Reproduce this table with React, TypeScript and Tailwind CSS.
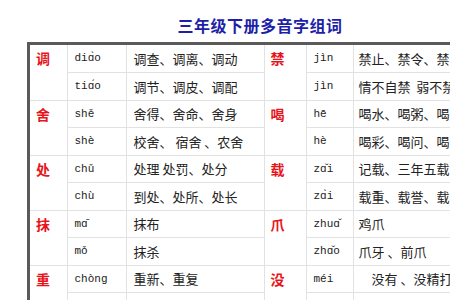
import React from "react";

type Row = { py: string; words: string };
type Group = { char: string; rows: Row[] };

const left: Group[] = [
    { char: "调", rows: [{ py: "diɑ̀o", words: "调查、调离、调动" }, { py: "tiɑ́o", words: "调节、调皮、调配" }] },
    { char: "舍", rows: [{ py: "shě", words: "舍得、舍命、舍身" }, { py: "shè", words: "校舍、 宿舍 、农舍" }] },
    { char: "处", rows: [{ py: "chǔ", words: "处理 处罚、处分" }, { py: "chù", words: "到处、处所、处长" }] },
    { char: "抹", rows: [{ py: "mɑ̄", words: "抹布" }, { py: "mǒ", words: "抹杀" }] },
    { char: "重", rows: [{ py: "chòng", words: "重新、重复" }, { py: "zhòng", words: "重量 、重心 、重要" }] },
];

const right: Group[] = [
    { char: "禁", rows: [{ py: "jìn", words: "禁止、禁令、禁区" }, { py: "jìn", words: "情不自禁  弱不禁风" }] },
    { char: "喝", rows: [{ py: "hē", words: "喝水、喝粥、喝汤" }, { py: "hè", words: "喝彩、喝问、喝道" }] },
    { char: "载", rows: [{ py: "zɑ̌i", words: "记载、三年五载" }, { py: "zɑ̀i", words: "载重、载誉、载客" }] },
    { char: "爪", rows: [{ py: "zhuɑ̌", words: "鸡爪" }, { py: "zhɑ̌o", words: "爪牙 、前爪" }] },
    { char: "没", rows: [{ py: "méi", words: "\u3000没有 、没精打采" }, { py: "mò", words: "\u3000淹没 、沉没" }] },
];

const cjk = { fontFamily: '"Noto Sans CJK SC", sans-serif' };
const mono = { fontFamily: '"Liberation Mono", "DejaVu Sans Mono", monospace' };

const CharCell = ({ char }: { char: string }) => (
    <td
        rowSpan={2}
        className="border border-[#e2e2e2] align-top pl-[6px] text-[14px] leading-[27px] font-bold text-[#e8141b]"
        style={cjk}
    >
        {char}
    </td>
);

const PyCell = ({ py }: { py: string }) => (
    <td className="border border-[#e2e2e2] pl-[7px] text-[11px] text-[#222] whitespace-pre" style={mono}>
        {py}
    </td>
);

const WordCell = ({ words, pl }: { words: string; pl: string }) => (
    <td className={`border border-[#e2e2e2] ${pl} text-[13px] text-[#222] whitespace-pre`} style={cjk}>
        {words}
    </td>
);

export default function App() {
    return (
        <div className="w-[450px] h-[300px] overflow-hidden bg-white">
            <div className="w-[520px]">
                <h1
                    className="h-[42px] pt-[8px] flex items-center justify-center text-[16px] font-bold text-[#1d1fa8] tracking-[0.5px]"
                    style={cjk}
                >
                    三年级下册多音字组词
                </h1>
                <div className="ml-[27px] w-[470px] border-t-[3px] border-l-[3px] border-t-[#5a5a5a] border-l-[#5a5a5a] bg-white">
                    <table className="border-collapse border-hidden table-fixed w-full">
                        <colgroup>
                            <col className="w-[37px]" />
                            <col className="w-[59px]" />
                            <col className="w-[138px]" />
                            <col className="w-[42px]" />
                            <col className="w-[47px]" />
                            <col className="w-[147px]" />
                        </colgroup>
                        <tbody>
                            {left.map((g, gi) =>
                                g.rows.map((r, ri) => (
                                    <tr key={`${gi}-${ri}`} className="h-[27.5px]">
                                        {ri === 0 && <CharCell char={g.char} />}
                                        <PyCell py={r.py} />
                                        <WordCell words={r.words} pl="pl-[7px]" />
                                        {ri === 0 && <CharCell char={right[gi].char} />}
                                        <PyCell py={right[gi].rows[ri].py} />
                                        <WordCell words={right[gi].rows[ri].words} pl="pl-[5px]" />
                                    </tr>
                                )),
                            )}
                        </tbody>
                    </table>
                </div>
            </div>
        </div>
    );
}
